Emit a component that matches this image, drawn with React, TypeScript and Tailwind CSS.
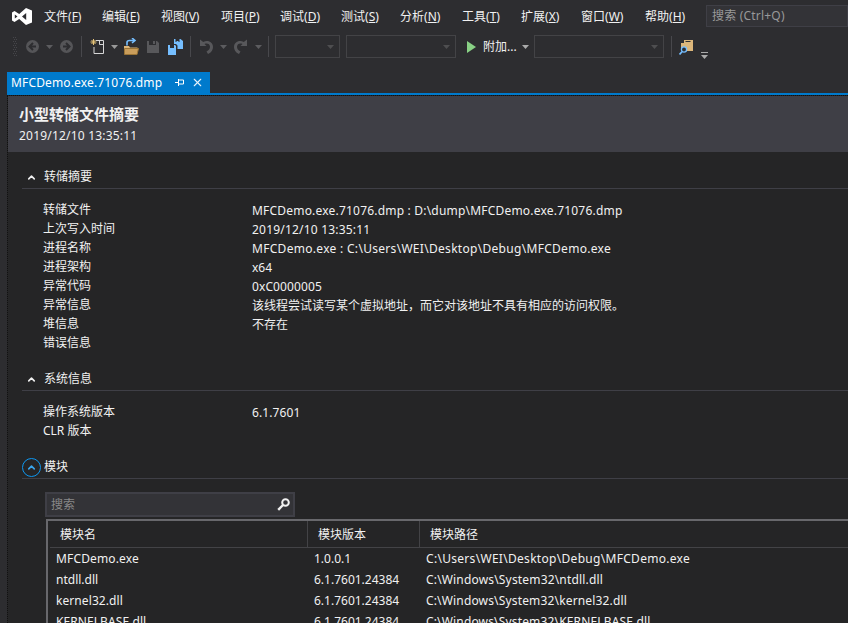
import React from "react";
import { ChevronUp, X } from "lucide-react";

const FONT = "font-['Noto_Sans','Noto_Sans_CJK_SC',sans-serif]";

const menus = [
  ["文件", "F", "w-[58px]"],
  ["编辑", "E", "w-[59px]"],
  ["视图", "V", "w-[60px]"],
  ["项目", "P", "w-[59px]"],
  ["调试", "D", "w-[61px]"],
  ["测试", "S", "w-[59px]"],
  ["分析", "N", "w-[62px]"],
  ["工具", "T", "w-[59px]"],
  ["扩展", "X", "w-[60px]"],
  ["窗口", "W", "w-[64px]"],
  ["帮助", "H", "w-[61px]"],
];

function VSLogo() {
  return (
    <svg width="20" height="17" viewBox="0 0 20 17" className="shrink-0">
      <path
        fill="#fff"
        fillRule="evenodd"
        d="M14 0 20 2.500V14.500L14 17 7.200 11 2.500 14 0 12.500V4.500L2.500 3 7.200 6ZM14.200 5 10 8.500 14.200 12ZM2.800 6.500V10.500L5.500 8.500Z"
      />
    </svg>
  );
}

function Caret({ color = "#777" }: { color?: string }) {
  return <svg width="7" height="4" viewBox="0 0 7 4" className="shrink-0"><path d="M0 0h7L3.500 4z" fill={color} /></svg>;
}

function Sep() {
  return <div className="w-px h-[21px] bg-[#48484c] shrink-0" />;
}

function Combo({ w }: { w: string }) {
  return (
    <div className={`${w} h-[23px] border border-[#434346] flex items-center justify-end pr-[5px] box-border shrink-0`}>
      <Caret color="#4e4e50" />
    </div>
  );
}

function Undo({ className = "" }: { className?: string }) {
  return (
    <svg width="14" height="15" viewBox="0 0 14 15" className={`shrink-0 ${className}`}>
      <path d="M1 .5V7h6.500L5.500 5C8 3.800 11 5 11 7.800c0 2-1.200 3.500-3.500 4.700L9 15c3.500-1.500 5-4.200 5-7 0-4.800-5-7.500-9.800-5L1 .5Z" fill="#58585b" />
    </svg>
  );
}

function Toolbar() {
  return (
    <div className="h-[27px] flex items-center pl-[13px] shrink-0">
      <svg width="4" height="20" viewBox="0 0 4 20" className="shrink-0">
        {[0, 4, 8, 12, 16].map((y) => (
          <g key={y} fill="#46464a">
            <rect x="0" y={y} width="1" height="1" />
            <rect x="2" y={y} width="1" height="1" />
            <rect x="1" y={y + 2} width="1" height="1" />
            <rect x="3" y={y + 2} width="1" height="1" />
          </g>
        ))}
      </svg>
      <svg width="13" height="13" viewBox="0 0 13 13" className="ml-[9px] shrink-0">
        <circle cx="6.500" cy="6.500" r="6.500" fill="#555558" />
        <path d="M7 3 3.500 6.500 7 10M4 6.500h6" stroke="#2d2d30" strokeWidth="2" fill="none" />
      </svg>
      <div className="ml-[7px]"><Caret color="#5c5c5f" /></div>
      <svg width="13" height="13" viewBox="0 0 13 13" className="ml-[7px] shrink-0">
        <circle cx="6.500" cy="6.500" r="6.500" fill="#555558" />
        <path d="M6 3 9.500 6.500 6 10M9 6.500H3" stroke="#2d2d30" strokeWidth="2" fill="none" />
      </svg>
      <div className="ml-[8px]"><Sep /></div>
      <svg width="14" height="17" viewBox="0 0 14 17" className="ml-[8px] shrink-0">
        <path d="M6 2.500h7.500V15.500H4V9" fill="none" stroke="#d6d6d6" strokeWidth="1" />
        <path d="M9.500 3v3.500h4" fill="none" stroke="#d6d6d6" strokeWidth="1" />
        <path d="M3.500 1v6M.5 4h6M1.500 2l4 4M5.500 2l-4 4" stroke="#e8c578" strokeWidth="1" />
      </svg>
      <div className="ml-[7px]"><Caret color="#999" /></div>
      <svg width="15" height="17" viewBox="0 0 15 17" className="ml-[6px] shrink-0">
        <path d="M0 8h5l1 1.500h7.500V11H0z" fill="#dcb67a" />
        <path d="M.5 10.500h14L13 16.500H.5z" fill="#c99d5b" stroke="#9a7436" strokeWidth="1" />
        <path d="M3 7.500V4.500C3 3 4 2.500 5.500 2.500H10M8 0l3 2.500L8 5" stroke="#75beff" strokeWidth="1.600" fill="none" />
      </svg>
      <svg width="12" height="12" viewBox="0 0 12 12" className="ml-[8px] shrink-0">
        <path d="M0 0h2v4h7V0h1l2 2v10H0z" fill="#58585b" />
        <path d="M6 0h2v3H6z" fill="#58585b" />
      </svg>
      <svg width="15" height="16" viewBox="0 0 15 16" className="ml-[9px] shrink-0">
        <path d="M0 6h2v3h4V6h1l1 1v9H0z" fill="#75beff" />
        <path d="M6 0h1.500v3h4V0h1L15 2v8H9.500V6.500L8 5H6z" fill="#75beff" />
        <path d="M8.500 2h2v1.500h-2z" fill="#75beff" />
      </svg>
      <div className="ml-[7px]"><Sep /></div>
      <div className="ml-[8px]"><Undo /></div>
      <div className="ml-[7px]"><Caret color="#5c5c5f" /></div>
      <div className="ml-[7px]"><Undo className="-scale-x-100" /></div>
      <div className="ml-[7px]"><Caret color="#5c5c5f" /></div>
      <div className="ml-[6px]"><Sep /></div>
      <div className="w-[6px] shrink-0" />
      <Combo w="w-[65px]" />
      <div className="w-[6px] shrink-0" />
      <Combo w="w-[110px]" />
      <svg width="9" height="12" viewBox="0 0 9 12" className="ml-[11px] shrink-0"><path d="M0 0l9 6-9 6z" fill="#89d185" /></svg>
      <span className="ml-[7px] w-[33px] text-[12px] text-[#f1f1f1] whitespace-nowrap">附加...</span>
      <div className="ml-[6px]"><Caret color="#aaa" /></div>
      <div className="w-[5px] shrink-0" />
      <Combo w="w-[130px]" />
      <div className="ml-[7px]"><Sep /></div>
      <svg width="15" height="16" viewBox="0 0 15 16" className="ml-[7px] shrink-0">
        <path d="M2 4h3V1h9v11H2z" fill="#dcb67a" />
        <path d="M6.500 2.500h5" stroke="#2d2d30" strokeWidth="1" />
        <circle cx="5" cy="10.500" r="2.600" fill="#2d2d30" stroke="#75beff" strokeWidth="1.300" />
        <path d="M3.200 12.500 .5 15.500" stroke="#75beff" strokeWidth="1.700" />
      </svg>
      <div className="ml-[7px] mt-[17px] flex flex-col gap-[2px] items-center shrink-0">
        <div className="w-[7px] h-px bg-[#aaa]" />
        <Caret color="#aaa" />
      </div>
    </div>
  );
}

function SectionHead({ title, active, className = "" }: { title: string; active?: boolean; className?: string }) {
  return (
    <div className={`h-[22px] ml-[14px] pt-[6px] border-b border-[#3f3f46] flex items-center box-content ${className}`}>
      <div className={`w-[19px] h-[19px] rounded-full flex items-center justify-center box-border shrink-0 ${active ? "border border-[#0e97f0]" : ""}`}>
        <ChevronUp size={11} strokeWidth={3.500} color={active ? "#3aa6ee" : "#f1f1f1"} />
      </div>
      <span className="ml-[3px] text-[12px] text-[#f1f1f1]">{title}</span>
    </div>
  );
}

function Row({ k, v, t = "" }: { k: string; v?: string; t?: string }) {
  return (
    <div className="flex h-[19px] items-center pl-[35px] text-[12px] text-[#f1f1f1] whitespace-nowrap">
      <div className="w-[209px] shrink-0 pb-[2px]">{k}</div>
      <div className={t}>{v}</div>
    </div>
  );
}

const modules = [
  ["MFCDemo.exe", "1.0.0.1", "C:\\Users\\WEI\\Desktop\\Debug\\MFCDemo.exe", "tracking-[0.3px]", "tracking-[0.15px]"],
  ["ntdll.dll", "6.1.7601.24384", "C:\\Windows\\System32\\ntdll.dll", "tracking-[0.17px]", ""],
  ["kernel32.dll", "6.1.7601.24384", "C:\\Windows\\System32\\kernel32.dll", "tracking-[0.16px]", "tracking-[0.08px]"],
  ["KERNELBASE.dll", "6.1.7601.24384", "C:\\Windows\\System32\\KERNELBASE.dll", "tracking-[0.16px]", "tracking-[0.08px]"],
];

export default function App() {
  return (
    <div className={`w-[848px] h-[623px] overflow-hidden bg-[#2d2d30] flex flex-col ${FONT}`}>
      <div className="h-[33px] flex items-center shrink-0 whitespace-nowrap">
        <div className="ml-[12px] mr-[12px]"><VSLogo /></div>
        <div className="flex text-[12px] text-[#f1f1f1]">
          {menus.map(([n, k, w]) => (
            <div key={k} className={w}>{n}(<span className="underline">{k}</span>)</div>
          ))}
        </div>
        <div className="w-[142px] h-[22px] mb-[1px] bg-[#333337] border border-[#3f3f46] pl-[5px] flex items-center shrink-0 text-[12px] tracking-[0.2px] text-[#999]">搜索 (Ctrl+Q)</div>
      </div>
      <Toolbar />
      <div className="h-[12px] shrink-0" />
      <div className="h-[21px] shrink-0 pl-[7px] flex">
        <div className="w-[203px] bg-[#007acc] text-white flex items-center pl-[4px] text-[12px] whitespace-nowrap">
          <span className="w-[164px] tracking-[0.15px]">MFCDemo.exe.71076.dmp</span>
          <svg width="10" height="10" viewBox="0 0 10 10" className="shrink-0"><path d="M3.500 1v7M3.500 2h5v4h-5M0 4.500h3.500" stroke="#fff" fill="none" /></svg>
          <X size={13} color="#e8f3fb" strokeWidth={2} className="ml-[6px] shrink-0" />
        </div>
      </div>
      <div className="h-[2px] bg-[#007acc] ml-[7px] shrink-0" />
      <div className="flex-1 ml-[7px] bg-[#252526] border-t border-l border-dotted border-[#111] overflow-hidden min-h-0">
        <div className="h-[56px] bg-[#3f3f46] pl-[11px] pt-[9px] text-[#f1f1f1]">
          <div className="text-[15px] font-bold leading-[19px]">小型转储文件摘要</div>
          <div className="text-[12px] tracking-[0.2px] mt-[4px] leading-[16px]">2019/12/10 13:35:11</div>
        </div>
        <SectionHead title="转储摘要" className="mt-[8px]" />
        <div className="mt-[12px]">
          <Row k="转储文件" v="MFCDemo.exe.71076.dmp : D:\dump\MFCDemo.exe.71076.dmp" t="tracking-[0.2px]" />
          <Row k="上次写入时间" v="2019/12/10 13:35:11" t="tracking-[0.2px]" />
          <Row k="进程名称" v="MFCDemo.exe : C:\Users\WEI\Desktop\Debug\MFCDemo.exe" t="tracking-[0.3px]" />
          <Row k="进程架构" v="x64" />
          <Row k="异常代码" v="0xC0000005" t="tracking-[0.1px]" />
          <Row k="异常信息" v="该线程尝试读写某个虚拟地址，而它对该地址不具有相应的访问权限。" />
          <Row k="堆信息" v="不存在" />
          <Row k="错误信息" />
        </div>
        <SectionHead title="系统信息" className="mt-[9px]" />
        <div className="mt-[12px]">
          <Row k="操作系统版本" v="6.1.7601" t="tracking-[0.1px]" />
          <Row k="CLR 版本" />
        </div>
        <SectionHead title="模块" active className="mt-[9px]" />
        <div className="ml-[37px] mt-[13px] w-[250px] h-[25px] bg-[#333337] border-2 border-[#3f3f46] box-border flex items-center justify-between pl-[4px] pr-[3px] text-[12px] text-[#888]">
          <span>搜索</span>
          <svg width="13" height="13" viewBox="0 0 13 13" className="shrink-0">
            <circle cx="8.500" cy="4.500" r="3.300" fill="none" stroke="#f1f1f1" strokeWidth="2" />
            <path d="M6 7 1.200 11.800" stroke="#f1f1f1" strokeWidth="2.400" />
          </svg>
        </div>
        <div className="ml-[38px] mt-[2px] border-l-2 border-t-2 border-[#68686c] text-[12px] text-[#f1f1f1] whitespace-nowrap">
          <div className="flex h-[26px] items-center ml-[2px] border-b border-[#434346] box-content">
            <div className="w-[258px] pl-[10px] pt-[2px] h-full flex items-center border-r border-[#434346] box-border">模块名</div>
            <div className="w-[112px] pl-[10px] pt-[2px] h-full flex items-center border-r border-[#434346] box-border">模块版本</div>
            <div className="pl-[10px] pt-[2px]">模块路径</div>
          </div>
          {modules.map((m) => (
            <div key={m[0]} className="flex h-[21px] items-center pl-[8px]">
              <div className={`w-[258px] ${m[4]}`}>{m[0]}</div>
              <div className="w-[112px]">{m[1]}</div>
              <div className={m[3]}>{m[2]}</div>
            </div>
          ))}
        </div>
      </div>
    </div>
  );
}
